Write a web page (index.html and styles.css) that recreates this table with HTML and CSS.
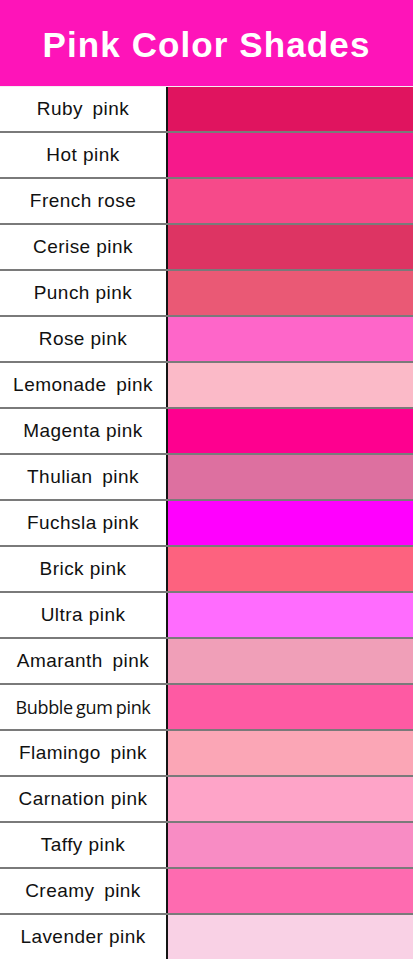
FILE: index.html
```html
<!DOCTYPE html>
<html lang="en">
<head>
<meta charset="utf-8">
<title>Pink Color Shades</title>
<link rel="stylesheet" href="styles.css">
</head>
<body>
<main class="chart">
  <header class="title-bar"><h1>Pink Color Shades</h1></header>
  <ul class="shades">
    <li class="shade"><span class="name wide">Ruby pink</span><span class="swatch" style="background:#e0145f"></span></li>
    <li class="shade"><span class="name">Hot pink</span><span class="swatch" style="background:#f6198b"></span></li>
    <li class="shade"><span class="name">French rose</span><span class="swatch" style="background:#f64a8a"></span></li>
    <li class="shade"><span class="name">Cerise pink</span><span class="swatch" style="background:#dd3463"></span></li>
    <li class="shade"><span class="name">Punch pink</span><span class="swatch" style="background:#ea5975"></span></li>
    <li class="shade"><span class="name">Rose pink</span><span class="swatch" style="background:#fe66c9"></span></li>
    <li class="shade"><span class="name wide">Lemonade pink</span><span class="swatch" style="background:#fbbac8"></span></li>
    <li class="shade"><span class="name">Magenta pink</span><span class="swatch" style="background:#fe008f"></span></li>
    <li class="shade"><span class="name wide">Thulian pink</span><span class="swatch" style="background:#dd70a0"></span></li>
    <li class="shade"><span class="name">Fuchsla pink</span><span class="swatch" style="background:#ff00fe"></span></li>
    <li class="shade"><span class="name">Brick pink</span><span class="swatch" style="background:#fd627f"></span></li>
    <li class="shade"><span class="name">Ultra pink</span><span class="swatch" style="background:#ff6cfe"></span></li>
    <li class="shade"><span class="name wide">Amaranth pink</span><span class="swatch" style="background:#f09fb8"></span></li>
    <li class="shade"><span class="name small">Bubble gum pink</span><span class="swatch" style="background:#fe5aa3"></span></li>
    <li class="shade"><span class="name wide">Flamingo pink</span><span class="swatch" style="background:#fba6b6"></span></li>
    <li class="shade"><span class="name">Carnation pink</span><span class="swatch" style="background:#fea4c8"></span></li>
    <li class="shade"><span class="name">Taffy pink</span><span class="swatch" style="background:#f88cc4"></span></li>
    <li class="shade"><span class="name wide">Creamy pink</span><span class="swatch" style="background:#fe6bb0"></span></li>
    <li class="shade"><span class="name">Lavender pink</span><span class="swatch" style="background:#f9d1e5"></span></li>
  </ul>
</main>
</body>
</html>
```
FILE: styles.css
```css
* { box-sizing: border-box; }

html, body {
  margin: 0;
  padding: 0;
  background: #ffffff;
}

body {
  font-family: "Liberation Sans", Arial, sans-serif;
  width: 413px;
  height: 960px;
  overflow: hidden;
}

.chart {
  display: flex;
  flex-direction: column;
}

.title-bar {
  height: 86px;
  background: #fe14b9;
  display: flex;
  align-items: center;
  justify-content: center;
}

.title-bar h1 {
  margin: 0;
  color: #ffffff;
  font-size: 35px;
  font-weight: 700;
  letter-spacing: 1.1px;
  line-height: 1;
  padding-top: 2px;
}

.shades {
  list-style: none;
  margin: 0;
  padding: 0;
}

.shade {
  display: flex;
  height: 46px;
  border-top: 2px solid rgba(0, 0, 0, 0.52);
}

.shade:first-child {
  border-top: 1px solid #f4eef2;
  height: 45px;
}

.name {
  width: 168px;
  flex: none;
  display: flex;
  align-items: center;
  justify-content: center;
  border-right: 2px solid #141414;
  font-size: 19px;
  letter-spacing: 0.45px;
  color: #111111;
  white-space: nowrap;
}

.name.wide {
  word-spacing: 4px;
}

.name.small {
  font-family: "Open Sans", sans-serif;
  font-size: 18px;
  letter-spacing: -0.35px;
  word-spacing: -1px;
}

.swatch {
  flex: 1;
}
```
